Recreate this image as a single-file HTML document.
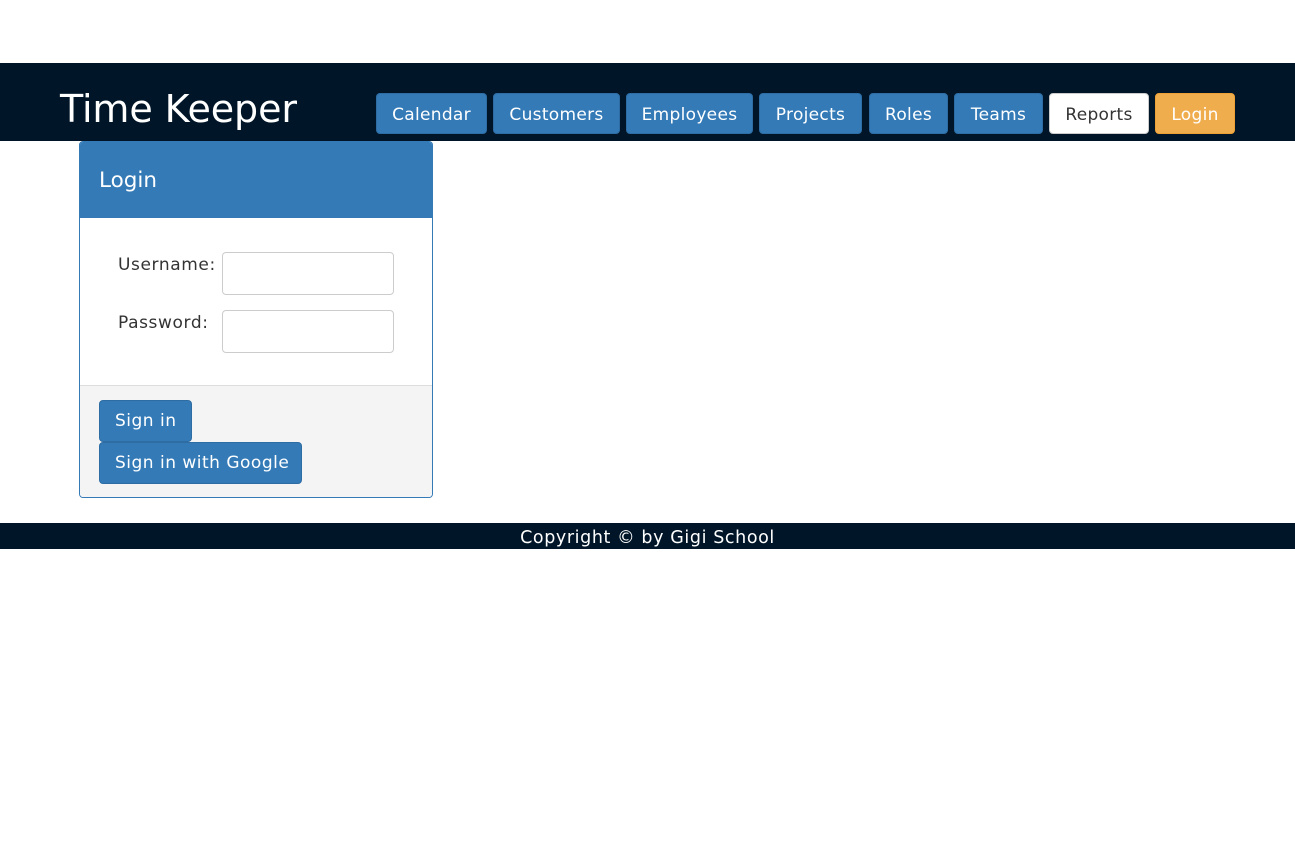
<!DOCTYPE html>
<html><head><style>
body{margin:0;width:1295px;height:844px;background:#fff;font-family:"DejaVu Sans",Verdana,sans-serif;position:relative;overflow:hidden}
.hdr{position:absolute;left:0;top:63px;width:1295px;height:78px;background:#001628}
.title{position:absolute;left:60px;top:84px;color:#fff;font-size:38px;line-height:50px;white-space:nowrap;letter-spacing:-0.1px}
.b{position:absolute;top:93px;height:41px;background:#337ab7;color:#fff;border-radius:4px;font-size:17px;letter-spacing:0.3px;line-height:42px;text-align:center;box-sizing:border-box;border:1px solid #2e6da4;white-space:nowrap}
.panel{position:absolute;left:79px;top:141px;width:354px;height:357px;box-sizing:border-box;border:1px solid #337ab7;border-radius:4px;overflow:hidden}
.ph{height:76px;background:#337ab7;color:#fff;font-size:21.5px;line-height:78px;padding-left:19px}
.lbl{position:absolute;left:38px;font-size:17px;letter-spacing:0.6px;color:#333}
.inp{position:absolute;left:142px;width:172px;height:43px;box-sizing:border-box;border:1px solid #ccc;border-radius:4px}
.pf{position:absolute;left:0;top:243px;width:354px;height:114px;background:#f4f4f4;border-top:1px solid #ddd}
.sb{position:absolute;left:19px;height:42px;background:#337ab7;border:1px solid #2e6da4;box-sizing:border-box;border-radius:4px;color:#fff;font-size:17px;letter-spacing:0.5px;line-height:41px;padding:0 15px;white-space:nowrap}
.ftr{position:absolute;left:0;top:523px;width:1295px;height:26px;background:#001628;color:#fff;text-align:center;font-size:17.5px;letter-spacing:0.6px;line-height:30px}
</style></head><body>
<div class="hdr"></div>
<div class="title">Time Keeper</div>
<div class="b" style="left:376px;width:111px">Calendar</div>
<div class="b" style="left:493px;width:127px">Customers</div>
<div class="b" style="left:626px;width:127px">Employees</div>
<div class="b" style="left:759px;width:103px">Projects</div>
<div class="b" style="left:869px;width:79px">Roles</div>
<div class="b" style="left:954px;width:89px">Teams</div>
<div class="b" style="left:1049px;width:100px;background:#fff;color:#333;border-color:#ccc">Reports</div>
<div class="b" style="left:1155px;width:80px;background:#f0ad4e;border-color:#eea236">Login</div>
<div class="panel">
<div class="ph">Login</div>
<div class="lbl" style="top:113px">Username:</div>
<div class="inp" style="top:110px"></div>
<div class="lbl" style="top:171px">Password:</div>
<div class="inp" style="top:168px"></div>
<div class="pf">
<div class="sb" style="top:14px;width:93px">Sign in</div>
<div class="sb" style="top:56px;width:203px">Sign in with Google</div>
</div>
</div>
<div class="ftr">Copyright © by Gigi School</div>
</body></html>
